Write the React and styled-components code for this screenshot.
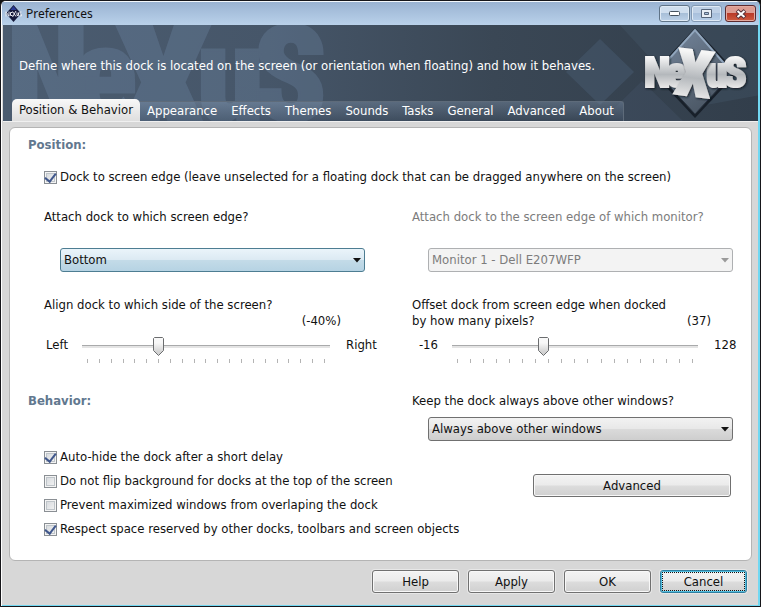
import React, { useState } from 'react';
import styled, { createGlobalStyle, css } from "styled-components";

const GlobalStyle = createGlobalStyle`
    * {
        box-sizing: border-box;
    }

    body {
        margin: 0;
        background: #111;
        color: #111;
        font: 13px/16px "DejaVu Sans Condensed", "DejaVu Sans", sans-serif;
    }

    button, select, input {
        font: inherit;
        color: inherit;
        margin: 0;
    }
`;

const Window = styled.div`
    display: flex;
    flex-direction: column;
    min-height: 100vh;
    border: 1px solid #16161a;
    border-radius: 6px 6px 0 0;
    background: #d7d7d7;
    overflow: hidden;
    box-shadow: inset 1px 1px 0 #fff, inset -2px -1px 0 #72d8f2;
    padding: 0 2px 1px 2px;
`;

const TitleBar = styled.header`
    display: flex;
    align-items: center;
    gap: 4px;
    height: 24px;
    margin: 0 -1px;
    padding: 0 3px 0 3px;
    border-top: 1px solid #f4f8fc;
    background: linear-gradient(#9ab3d2, #b9d1ea);
`;

const Title = styled.h1`
    flex: 1;
    margin: 0;
    font: 400 12px/16px "Noto Sans", sans-serif;
`;

const WindowButtons = styled.div`
    display: flex;
    gap: 1px;
`;

const WindowButton = styled.button`
    display: flex;
    align-items: center;
    justify-content: center;
    width: 31px;
    height: 17px;
    padding: 0;
    border: 1px solid #5f7387;
    border-radius: 3px;
    background: linear-gradient(#cfdeee 45%, #a8bfd8 50%, #bdd2e8);
    box-shadow: inset 0 0 0 1px #dfeaf5;

    ${(p) =>
        p.$muted &&
        css`
            border-color: #8298b2;
            background: linear-gradient(#bed0e6 45%, #a9c0dc 50%, #b7cee8);
        `
    }

    ${(p) =>
        p.$close &&
        css`
            margin-left: 2px;
            border-color: #5c2a2e;
            background: linear-gradient(#dc9c92 45%, #b93a28 50%, #cf5c40);
            box-shadow: inset 0 0 0 1px #e3aaa0;
        `
    }
`;

const Banner = styled.div`
    position: relative;
    display: flex;
    flex-direction: column;
    justify-content: space-between;
    height: 97px;
    background: linear-gradient(90deg, #4b5c70, #465669 35%, #3a4755 65%, #323e4b);
    border-bottom: 1px solid #f0f0f0;
    color: #fff;
    overflow: hidden;
`;

const Art = styled.svg`
    position: absolute;
    top: 0;
    ${(p) => (p.$right ? "right: 0;" : "left: 0;")}
    pointer-events: none;
`;

const Intro = styled.p`
    position: relative;
    margin: 33px 0 0 16px;
    font-size: 13px;
    line-height: 16px;
`;

const TabList = styled.nav`
    position: relative;
    align-self: flex-start;
    display: flex;
    align-items: flex-end;
    height: 22px;
    margin-left: 9px;
`;

const TabStrip = styled.div`
    display: flex;
    height: 20px;
    padding-right: 2px;
    border: 1px solid #5e6b7a;
    border-width: 1px 1px 0 0;
    border-radius: 0 3px 0 0;
    background: linear-gradient(rgba(130, 150, 175, 0.4), rgba(60, 75, 95, 0.3));
`;

const Tab = styled.button`
    padding: 0 7px 2px;
    border: 0;
    background: none;
    line-height: 16px;
    white-space: nowrap;

    ${(p) =>
        p.$active &&
        css`
            height: 22px;
            padding-top: 2px;
            border-radius: 5px 5px 0 0;
            background: linear-gradient(#f8f8f8, #dedede);
            color: #111;
        `
    }
`;

const Panel = styled.main`
    flex: 1;
    display: grid;
    grid-template-columns: repeat(2, minmax(0, 1fr));
    column-gap: 47px;
    align-content: start;
    margin: 5px 6px 0;
    padding: 9px 18px 18px 34px;
    border: 1px solid #b4b4b4;
    border-radius: 6px;
    background: #fff;
`;

const Heading = styled.h2`
    grid-column: ${(p) => (p.$wide ? "1 / -1" : "auto")};
    margin: 0 0 0 -16px;
    color: #62788f;
    font-size: 13px;
    font-weight: 700;
    line-height: 16px;
`;

const CheckLabel = styled.label`
    display: flex;
    align-items: center;
    gap: 3px;
    height: 24px;
    white-space: nowrap;
`;

const CheckBox = styled.input.attrs({ type: "checkbox" })`
    appearance: none;
    flex: none;
    display: grid;
    place-items: center;
    width: 13px;
    height: 13px;
    border: 1px solid #8a8f94;
    background: linear-gradient(135deg, #d2d6da, #f6f6f6);
    box-shadow: inset 0 0 0 1px #f4f4f4, inset 0 0 0 2px #bfc5ca;

    &:checked::before {
        content: "";
        width: 5px;
        height: 9px;
        margin-top: -2px;
        border: solid #40578c;
        border-width: 0 2px 2px 0;
        transform: rotate(38deg);
    }
`;

const DockCheck = styled.div`
    grid-column: 1 / -1;
    margin: 12px 0 20px;
`;

const Field = styled.div`
    display: flex;
    flex-direction: column;
    gap: ${(p) => p.$gap || 0}px;
    color: ${(p) => (p.$disabled ? "#7c7c7c" : "inherit")};
`;

const SelectBox = styled.div`
    position: relative;
    margin-left: 16px;

    svg {
        position: absolute;
        top: 10px;
        right: 4px;
        pointer-events: none;
    }
`;

const Select = styled.select`
    appearance: none;
    display: block;
    width: 100%;
    height: 24px;
    padding: 0 20px 0 3px;
    border: 1px solid #707070;
    border-radius: 3px;
    background: linear-gradient(#f2f2f2, #e8e8e8 48%, #dadada 52%, #cecece);

    ${(p) =>
        p.$focused &&
        css`
            border-color: #4d7d92;
            background: linear-gradient(#eaf4fa, #dceaf3 48%, #c3dbe8 52%, #b6d3e3);
        `
    }

    &:disabled {
        border-color: #aeb0b2;
        background: #f3f3f3;
        opacity: 1;
        color: #7c7c7c;
    }
`;

const SliderField = styled.div`
    margin-top: 25px;
`;

const SliderHead = styled.div`
    display: flex;
    align-items: flex-end;
    justify-content: space-between;
    height: 32px;
    padding-right: ${(p) => p.$inset}px;

    label {
        align-self: flex-start;
        white-space: pre-line;
    }
`;

const SliderRow = styled.div`
    display: grid;
    grid-template-columns: ${(p) => p.$lead}px 1fr 46px;
    align-items: start;
    margin: 8px -11px 0 0;
    line-height: 16px;
`;

const LowLabel = styled.span`
    padding-right: 14px;
    text-align: right;
`;

const HighLabel = styled.span`
    padding-left: 16px;
`;

const Range = styled.input.attrs({ type: "range" })`
    appearance: none;
    display: block;
    width: 100%;
    height: 19px;
    background: linear-gradient(#a9aaab, #a9aaab) 0 8px / 100% 1px no-repeat,
        linear-gradient(#e4e4e4, #e4e4e4) 0 9px / 100% 2px no-repeat;

    &::-webkit-slider-thumb {
        appearance: none;
        width: 11px;
        height: 19px;
        background: ${(p) => p.$thumb} center no-repeat;
    }
`;

const Ticks = styled.div`
    display: flex;
    justify-content: space-between;
    margin-top: 3px;
    padding: 0 5px;

    span {
        width: 1px;
        height: 4px;
        background: #b4b4b4;
    }
`;

const BehaviorRow = styled.div`
    grid-column: 1 / -1;
    display: grid;
    grid-template-columns: subgrid;
    margin-top: 30px;
`;

const CheckList = styled.div`
    margin-top: 36px;
`;

const PushButton = styled.button`
    width: ${(p) => p.$width}px;
    height: 23px;
    padding: 0;
    border: 1px solid #707070;
    border-radius: 3px;
    background: linear-gradient(#f3f3f3, #ebebeb 48%, #dcdcdc 52%, #d0d0d0);
    box-shadow: inset 0 0 0 1px #f8f8f8, 0 0 0 1px rgba(255, 255, 255, 0.4);

    ${(p) =>
        p.$focused &&
        css`
            border-color: #2f7fa0;
            box-shadow: inset 0 0 0 1px #52bfe0, 0 0 0 1px rgba(255, 255, 255, 0.4);
            outline: 1px dotted #111;
            outline-offset: -3px;
        `
    }
`;

const AdvancedRow = styled.div`
    display: flex;
    justify-content: flex-end;
    margin-top: 33px;
    padding-right: 2px;
`;

const Footer = styled.footer`
    display: flex;
    justify-content: flex-end;
    gap: 9px;
    padding: 9px 11px 12px;
`;

const TABS = ["Appearance", "Effects", "Themes", "Sounds", "Tasks", "General", "Advanced", "About"];

const THUMB = `url("data:image/svg+xml,${encodeURIComponent(
    '<svg xmlns="http://www.w3.org/2000/svg" width="11" height="19"><defs><linearGradient id="g" x2="0" y2="1"><stop offset=".3" stop-color="#f8f8f8"/><stop offset=".8" stop-color="#d2d2d2"/></linearGradient></defs><path d="M1.5 .5h8l1 1v12l-5 5-5-5v-12z" fill="url(#g)" stroke="#6b6d6f"/></svg>'
)}")`;

const AppIcon = () => (
    <svg width="17" height="17" viewBox="0 0 17 17">
        <path d="M8.5 0l7.5 8.5-7.5 8.5L1 8.5z" fill="#151a3c" />
        <path d="M8.5 1l3 4h-6z" fill="#2a3a96" />
        <path d="M1 6.500v5M1 7l3 4M4 6.500v5M7.500 7.500H5.500v3h2M7.500 6.500l3.500 5M11 6l-3.500 6M12 7.500v3h1.500v-3M16.500 7H15v1.500l1.500 1V11H15" fill="none" stroke="#e6e8ee" />
    </svg>
);

const Arrow = ({ muted }) => (
    <svg width="8" height="5" viewBox="0 0 8 5">
        <path d="M0 0h8L4 4.500z" fill={muted ? "#9a9a9a" : "#111"} />
    </svg>
);

const Watermark = () => (
    <Art width="400" height="97" viewBox="0 0 400 97" aria-hidden="true"
        fontFamily="Roboto Condensed, Roboto, sans-serif" fontWeight="900" fill="#7d99bd" stroke="#7d99bd" strokeWidth="3" opacity="0.24">
        <text x="4" y="96" fontSize="134">N</text>
        <text x="69" y="96" fontSize="134">e</text>
        <text x="108" y="124" fontSize="186">X</text>
        <text x="194" y="96" fontSize="134">u</text>
        <text x="250" y="96" fontSize="134">S</text>
    </Art>
);

const Logo = () => (
    <Art $right width="200" height="97" viewBox="0 0 200 97" role="img" aria-label="NeXuS">
        <defs>
            <linearGradient id="steel" x2="0" y2="1">
                <stop offset="0.2" stopColor="#f6f6f6" />
                <stop offset="0.55" stopColor="#b4b8bc" />
                <stop offset="0.8" stopColor="#e6e6e6" />
            </linearGradient>
            <linearGradient id="gem" x2="0.6" y2="1">
                <stop offset="0" stopColor="#7688a0" />
                <stop offset="0.6" stopColor="#5c6a7a" />
                <stop offset="1" stopColor="#4a5664" />
            </linearGradient>
            <filter id="shade" x="-20%" y="-20%" width="140%" height="140%">
                <feDropShadow dx="1" dy="1" stdDeviation="1" floodColor="#10151b" floodOpacity="0.9" />
            </filter>
        </defs>
        <path d="M42 14l34 33-34 33L8 47z" fill="#45566a" opacity="0.6" />
        <path d="M59 -3h160v70L137 82z" fill="#4a5c72" opacity="0.3" />
        <path d="M42 97l42-41 42 41z" fill="#4a5c72" opacity="0.25" />
        <path d="M137 3l42 45-42 45-42-45z" fill="#18202a" />
        <path d="M137 5l38 43-38 41-38-41z" fill="url(#gem)" stroke="#2a3440" />
        <path d="M102 44l35-39 34 39" fill="none" stroke="#91a6bd" strokeWidth="2" />
        <g fontFamily="Roboto Condensed, Roboto, sans-serif" fontWeight="900" fill="url(#steel)" stroke="url(#steel)" strokeWidth="2">
            <g filter="url(#shade)">
                <text x="86" y="62" fontSize="43">N</text>
                <text x="108" y="62" fontSize="43">e</text>
                <text x="148" y="62" fontSize="43">u</text>
                <text x="165" y="62" fontSize="43">S</text>
            </g>
            <g filter="url(#shade)">
                <text x="118" y="71" fontSize="64" transform="rotate(7 138 49)">X</text>
            </g>
        </g>
    </Art>
);

const Dropdown = ({ id, label, gap, options, disabled, focused }) => (
    <Field $gap={gap} $disabled={disabled}>
        <label htmlFor={id}>{label}</label>
        <SelectBox>
            <Select id={id} disabled={disabled} $focused={focused}>
                {options.map((o) => <option key={o}>{o}</option>)}
            </Select>
            <Arrow muted={disabled} />
        </SelectBox>
    </Field>
);

const Slider = ({ id, label, low, high, min, max, initial, ticks, lead, inset, format }) => {
    const [value, setValue] = useState(initial);

    return (
        <SliderField>
            <SliderHead $inset={inset}>
                <label htmlFor={id}>{label}</label>
                <output htmlFor={id}>({format(value)})</output>
            </SliderHead>
            <SliderRow $lead={lead}>
                <LowLabel>{low}</LowLabel>
                <div>
                    <Range id={id} min={min} max={max} value={value} $thumb={THUMB}
                        onChange={(e) => setValue(Number(e.target.value))} />
                    <Ticks>
                        {Array.from({ length: ticks }, (_, i) => <span key={i} />)}
                    </Ticks>
                </div>
                <HighLabel>{high}</HighLabel>
            </SliderRow>
        </SliderField>
    );
};

const Check = ({ label, checked }) => (
    <CheckLabel>
        <CheckBox defaultChecked={checked} />
        {label}
    </CheckLabel>
);

export default function App() {
    return (
        <Window>
            <GlobalStyle />
            <TitleBar>
                <AppIcon />
                <Title>Preferences</Title>
                <WindowButtons>
                    <WindowButton aria-label="Minimize">
                        <svg width="11" height="5"><rect x=".5" y=".5" width="10" height="4" rx="1" fill="#fff" stroke="#46535f" /></svg>
                    </WindowButton>
                    <WindowButton aria-label="Maximize" $muted>
                        <svg width="11" height="9"><path d="M.5.5h10v8H.5zM3.500 3.500h4v2h-4z" fill="#e8eef5" fillRule="evenodd" stroke="#56657a" /></svg>
                    </WindowButton>
                    <WindowButton aria-label="Close" $close>
                        <svg width="12" height="10" viewBox="0 0 12 10">
                            <path d="M2 1.500l8 7M10 1.500l-8 7" stroke="#553038" strokeWidth="4" />
                            <path d="M2.500 2l7 6M9.500 2l-7 6" stroke="#fff" strokeWidth="2" />
                        </svg>
                    </WindowButton>
                </WindowButtons>
            </TitleBar>
            <Banner>
                <Watermark />
                <Logo />
                <Intro>Define where this dock is located on the screen (or orientation when floating) and how it behaves.</Intro>
                <TabList>
                    <Tab $active>Position &amp; Behavior</Tab>
                    <TabStrip>
                        {TABS.map((name) => <Tab key={name}>{name}</Tab>)}
                    </TabStrip>
                </TabList>
            </Banner>
            <Panel>
                <Heading $wide>Position:</Heading>
                <DockCheck>
                    <Check checked label="Dock to screen edge (leave unselected for a floating dock that can be dragged anywhere on the screen)" />
                </DockCheck>
                <Dropdown id="edge" gap={23} focused label="Attach dock to which screen edge?" options={["Bottom", "Top", "Left", "Right"]} />
                <Dropdown id="monitor" gap={23} disabled label="Attach dock to the screen edge of which monitor?" options={["Monitor 1 - Dell E207WFP"]} />
                <Slider id="align" label="Align dock to which side of the screen?" low="Left" high="Right"
                    min={-100} max={100} initial={-40} ticks={21} lead={38} inset={24} format={(v) => `${v}%`} />
                <Slider id="offset" label={"Offset dock from screen edge when docked\nby how many pixels?"} low="-16" high="128"
                    min={-16} max={128} initial={37} ticks={19} lead={40} inset={22} format={(v) => v} />
                <BehaviorRow>
                    <div>
                        <Heading>Behavior:</Heading>
                        <CheckList>
                            <Check checked label="Auto-hide the dock after a short delay" />
                            <Check label="Do not flip background for docks at the top of the screen" />
                            <Check label="Prevent maximized windows from overlaping the dock" />
                            <Check checked label="Respect space reserved by other docks, toolbars and screen objects" />
                        </CheckList>
                    </div>
                    <div>
                        <Dropdown id="above" gap={8} label="Keep the dock always above other windows?" options={["Always above other windows", "Normal"]} />
                        <AdvancedRow>
                            <PushButton $width={198}>Advanced</PushButton>
                        </AdvancedRow>
                    </div>
                </BehaviorRow>
            </Panel>
            <Footer>
                <PushButton $width={87}>Help</PushButton>
                <PushButton $width={87}>Apply</PushButton>
                <PushButton $width={87}>OK</PushButton>
                <PushButton $width={87} $focused>Cancel</PushButton>
            </Footer>
        </Window>
    );
}
